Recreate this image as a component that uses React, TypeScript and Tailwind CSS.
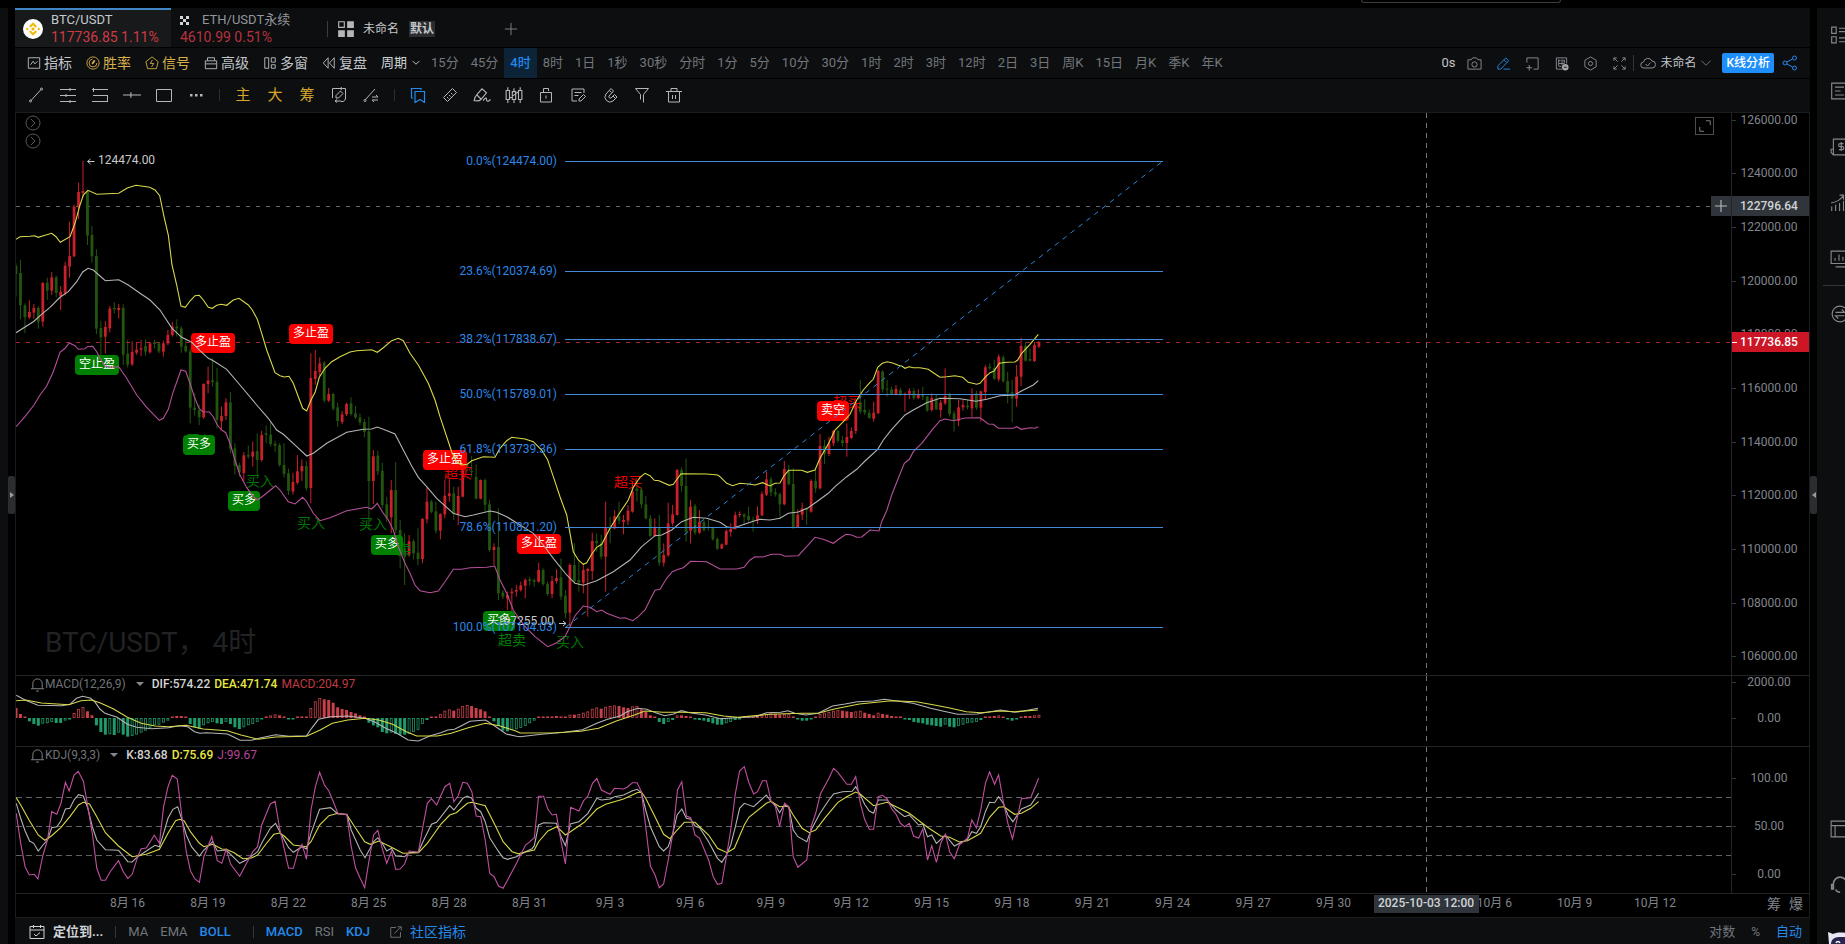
import type { ReactNode } from "react";

type Zone = { x: number; y: number; k: number; pts: string };
type Candle = [number, number, number, number, number];

const UP = "#c9202b";
const DOWN = "#22560f";
const STEP = 4.467;

// rows are [up, high, top, bottom, low], three units to a pixel
const candleZones: { y: number; rows: Candle[] }[] = [
  {
    y: -3,
    rows: [
      [0, 460, 468, 492, 560], [0, 450, 489, 586, 628], [0, 580, 586, 622, 670], [1, 571, 606, 622, 627],
      [1, 582, 594, 608, 626], [0, 588, 594, 635, 656], [1, 516, 519, 635, 650], [0, 503, 518, 542, 570],
      [1, 486, 502, 542, 555], [0, 497, 502, 549, 562], [1, 528, 545, 558, 600], [1, 455, 467, 550, 556],
      [1, 335, 438, 470, 503], [1, 284, 290, 439, 441], [1, 218, 246, 290, 328], [1, 152, 243, 249, 262],
      [0, 240, 243, 377, 405], [0, 348, 375, 439, 458], [0, 418, 438, 656, 672], [0, 632, 654, 682, 745],
      [1, 633, 651, 680, 730], [1, 588, 596, 655, 667], [0, 576, 594, 598, 611], [1, 582, 594, 600, 625],
      [0, 583, 594, 734, 765], [0, 690, 731, 764, 772], [1, 694, 726, 763, 768], [1, 698, 719, 728, 734],
      [1, 690, 715, 719, 738], [0, 688, 708, 725, 737], [1, 695, 700, 727, 730], [0, 690, 697, 702, 716],
      [0, 695, 700, 724, 730], [1, 692, 700, 725, 740], [1, 660, 675, 700, 706], [1, 636, 650, 675, 680],
      [0, 628, 650, 655, 680], [0, 648, 655, 710, 728], [0, 684, 708, 724, 728], [0, 715, 724, 893, 940],
      [0, 850, 893, 900, 917], [0, 884, 900, 922, 945], [1, 820, 822, 922, 926], [1, 770, 811, 822, 850],
      [0, 745, 811, 816, 830], [0, 773, 815, 930, 955], [1, 890, 918, 934, 960], [1, 865, 877, 918, 930],
      [0, 846, 877, 1016, 1030],
    ],
  },
  {
    y: 187,
    rows: [
      [0, 430, 445, 497, 524], [0, 488, 495, 517, 530], [1, 456, 466, 519, 545], [0, 436, 465, 470, 476],
      [1, 425, 455, 470, 500], [0, 400, 453, 480, 525], [1, 392, 405, 480, 485], [0, 376, 400, 405, 430],
      [0, 364, 404, 432, 440], [0, 422, 431, 437, 455], [0, 430, 436, 495, 500], [0, 430, 495, 522, 533],
      [0, 506, 520, 573, 585], [1, 518, 546, 575, 583], [1, 465, 514, 548, 553], [1, 478, 498, 514, 543],
      [0, 482, 498, 565, 572], [1, 160, 234, 564, 610], [1, 150, 213, 237, 254], [1, 172, 190, 216, 228],
      [0, 183, 188, 302, 308], [1, 264, 282, 302, 306], [0, 278, 282, 326, 332], [0, 308, 322, 363, 380],
      [1, 333, 343, 366, 372], [1, 308, 312, 343, 348], [0, 292, 310, 342, 347], [0, 318, 340, 352, 357],
      [0, 340, 352, 367, 376], [0, 357, 366, 396, 412], [0, 350, 394, 543, 690], [1, 450, 469, 543, 612],
      [0, 452, 467, 514, 525], [0, 488, 512, 615, 625], [0, 590, 613, 655, 665], [1, 540, 570, 652, 700],
      [0, 486, 570, 690, 700], [0, 660, 690, 745, 805], [0, 700, 745, 770, 855], [1, 705, 724, 764, 770],
      [0, 718, 724, 760, 778], [0, 685, 758, 777, 796], [1, 654, 657, 777, 790], [1, 560, 605, 658, 670],
      [0, 600, 605, 635, 640], [0, 605, 634, 692, 700], [1, 640, 642, 692, 718], [1, 540, 587, 643, 655],
      [1, 535, 580, 588, 605], [0, 560, 580, 642, 660], [1, 560, 588, 642, 675], [1, 490, 500, 590, 592],
    ],
  },
  {
    y: 287,
    rows: [
      [0, 190, 195, 200, 215], [0, 168, 213, 216, 232], [0, 193, 231, 296, 298], [1, 238, 240, 296, 298],
      [0, 235, 240, 314, 335], [0, 300, 313, 450, 455], [1, 430, 441, 450, 495], [0, 325, 441, 580, 600],
      [0, 570, 578, 590, 597], [1, 575, 585, 595, 630], [1, 565, 575, 580, 635], [1, 555, 570, 575, 590],
      [1, 545, 556, 570, 575], [1, 535, 540, 557, 595], [0, 530, 538, 543, 557], [0, 536, 540, 545, 560],
      [1, 488, 510, 545, 548], [0, 505, 510, 552, 558], [0, 545, 552, 582, 588], [1, 528, 543, 582, 595],
      [1, 508, 534, 543, 550], [0, 475, 532, 590, 600], [0, 570, 587, 640, 655], [1, 490, 495, 638, 680],
      [0, 430, 495, 545, 550], [0, 485, 540, 548, 575], [1, 490, 510, 548, 580], [1, 503, 507, 513, 650],
      [1, 398, 423, 513, 540], [0, 400, 423, 430, 455], [0, 404, 430, 470, 478], [1, 305, 382, 470, 575],
      [0, 350, 382, 386, 430], [1, 330, 349, 385, 388], [0, 305, 349, 362, 372], [1, 345, 360, 366, 403],
      [1, 315, 332, 362, 375], [1, 245, 275, 335, 338], [0, 240, 266, 272, 305], [0, 262, 269, 313, 325],
      [0, 288, 313, 355, 358], [0, 345, 355, 408, 412], [1, 355, 382, 408, 410], [0, 345, 382, 488, 498],
      [1, 430, 465, 488, 500], [1, 308, 370, 466, 470], [1, 315, 343, 370, 378], [1, 207, 210, 345, 347],
      [0, 203, 210, 258, 275], [0, 175, 258, 395, 425], [1, 300, 320, 392, 430], [0, 312, 318, 398, 405],
      [1, 330, 365, 398, 402], [0, 360, 366, 390, 395], [0, 358, 380, 384, 392], [0, 380, 384, 418, 422],
      [0, 412, 417, 446, 450], [1, 430, 433, 446, 447], [1, 388, 393, 434, 436], [1, 370, 387, 396, 410],
      [1, 335, 345, 387, 389],
    ],
  },
  {
    y: 207,
    rows: [
      [1, 574, 582, 585, 592], [0, 580, 583, 590, 615], [0, 560, 588, 600, 605], [0, 590, 599, 602, 635],
      [1, 560, 586, 602, 612], [1, 514, 522, 586, 588], [1, 455, 478, 524, 528], [0, 470, 478, 517, 528],
      [0, 505, 517, 523, 530], [0, 518, 522, 553, 595], [1, 423, 447, 553, 556], [0, 435, 450, 493, 496],
      [0, 445, 492, 622, 627], [1, 568, 584, 622, 624], [1, 548, 565, 584, 600], [0, 563, 566, 570, 615],
      [1, 478, 483, 575, 578], [0, 448, 483, 505, 518], [1, 342, 378, 505, 508], [0, 360, 378, 402, 432],
      [1, 350, 370, 402, 408], [1, 330, 333, 370, 378], [0, 330, 333, 362, 368], [0, 348, 361, 369, 380],
      [1, 310, 351, 369, 410], [1, 322, 333, 354, 357], [1, 245, 250, 333, 342], [0, 180, 247, 275, 282],
      [0, 238, 270, 278, 285], [0, 268, 278, 294, 296], [1, 245, 278, 296, 305], [1, 150, 153, 280, 282],
      [0, 150, 155, 208, 218], [0, 180, 206, 209, 230], [0, 200, 208, 222, 224], [1, 195, 207, 223, 226],
      [0, 203, 210, 222, 228], [1, 218, 221, 224, 275], [1, 205, 213, 221, 237], [0, 205, 213, 234, 240],
      [1, 208, 225, 234, 238], [0, 200, 222, 230, 240], [0, 228, 230, 272, 275], [1, 220, 234, 270, 275],
      [0, 225, 235, 268, 270], [1, 240, 248, 270, 293], [1, 145, 228, 250, 255], [0, 218, 225, 282, 290],
      [0, 272, 280, 302, 335], [1, 240, 262, 303, 318], [1, 240, 255, 262, 272], [0, 240, 257, 262, 268],
      [1, 205, 222, 265, 292], [0, 212, 220, 263, 270], [1, 212, 214, 263, 305], [1, 136, 142, 216, 238],
      [0, 130, 140, 145, 150], [0, 120, 144, 176, 180], [1, 103, 110, 178, 185], [0, 106, 112, 184, 188],
      [0, 155, 183, 218, 250], [0, 180, 217, 236, 307], [1, 135, 170, 236, 260], [1, 53, 78, 170, 198],
      [0, 66, 78, 122, 125], [0, 85, 117, 122, 124], [1, 66, 75, 123, 126], [1, 63, 66, 80, 84],
    ],
  },
];

const candles = candleZones.flatMap((z) =>
  z.rows.map(([up, ...ys]) => ({ up, ys: ys.map((v) => z.y + v / 3) })),
);

const upperBand: Zone[] = [
  { x: -16, y: -3, k: 3, pts: "48,388 60,380 90,379 104,377 115,382 130,377 155,370 168,380 181,397 210,380 225,340 240,285 250,255 264,241 290,253 356,250 382,234 408,226 449,232 465,240 479,257 492,320 505,375 516,465 530,525 543,588 556,592 570,573 585,557 598,556 610,570 625,592 637,595 650,586 664,583 680,586 700,570 717,565 745,585 757,600 772,628 785,670 800,720" },
  { x: 164, y: 187, k: 3, pts: "285,218 300,227 313,231 327,229 340,250 355,290 368,325 380,333 393,300 406,275 418,232 435,205 455,185 480,170 510,156 530,152 575,149 592,157 610,143 635,122 655,115 670,122 690,160 715,195 745,250 765,300" },
  { x: 404, y: 287, k: 3, pts: "45,0 60,50 95,155 110,187 125,195 142,193 155,182 190,170 225,172 240,145 260,122 275,112 315,117 340,125 365,150 383,180 400,230 420,290 440,345 460,455 475,480 490,493 500,488 515,463 530,442 545,433 570,385 595,345 625,300 640,262 660,232 675,220 690,227 703,241 717,242 748,256 760,253 783,221 860,222 893,225" },
  { x: 704, y: 207, k: 3, pts: "0,470 20,490 38,497 60,490 85,492 105,495 128,488 150,498 165,490 180,489 192,467 206,451 245,451 262,457 285,450 300,415 325,372 345,330 370,305 390,283 410,240 430,210 450,187 460,178 473,142 487,130 502,125 520,130 535,136 545,138 555,145 567,140 580,143 600,143 625,148 640,158 660,172 680,170 705,167 728,172 745,187 770,193 780,190 795,172 810,158 822,153 838,130 860,127 885,126 893,120 905,100 930,73 955,43" },
];

const middleBand: Zone[] = [
  { x: -16, y: -3, k: 3, pts: "48,668 100,635 128,610 150,592 180,562 205,545 230,515 248,486 264,475 280,480 300,498 316,512 356,509 385,525 420,550 450,570 480,600 516,655 545,682 575,697 600,722 625,745 640,752 680,778 720,825 770,885 805,925" },
  { x: 164, y: 187, k: 3, pts: "290,390 310,403 350,440 380,468 400,460 440,430 500,397 550,388 575,387 592,381 610,388 645,402 670,450 695,498 715,532" },
  { x: 404, y: 287, k: 3, pts: "20,260 50,295 100,340 135,350 160,345 210,333 230,337 260,350 300,375 340,400 370,435 400,475 440,525 465,550 490,556 530,542 580,515 630,480 665,440 705,407 725,405 755,390 785,365 820,352 860,355 890,364" },
  { x: 704, y: 207, k: 3, pts: "0,607 20,620 40,624 60,617 95,605 120,598 150,600 180,595 205,580 235,576 265,563 290,545 325,520 345,500 380,470 410,448 435,423 473,388 490,360 515,328 555,285 580,270 620,248 660,235 720,236 768,244 800,238 840,227 885,225 900,215 940,195 955,182" },
];

const lowerBand: Zone[] = [
  { x: -16, y: -3, k: 3, pts: "48,950 75,920 102,885 120,855 140,828 160,785 180,727 195,715 208,699 225,707 235,718 255,716 262,710 278,709 290,725 300,745 315,768 330,772 356,770 380,805 410,855 440,892 478,931 490,925 505,898 518,850 543,780 557,784 570,820 583,860 597,895 608,905 628,906 640,920 652,945 665,960" },
  { x: 164, y: 187, k: 3, pts: "137,398 150,430 165,480 180,525 200,563 220,590 232,600 250,587 287,557 300,570 325,605 345,612 368,592 380,605 400,640 420,662 450,653 500,632 560,622 575,627 592,610 610,640 625,660 640,690 655,740 675,790 690,820 705,855 720,872 750,878 775,873 795,845" },
  { x: 404, y: 287, k: 3, pts: "100,508 125,508 150,503 200,502 224,498 240,540 260,580 280,630 300,660 320,685 345,710 383,740 410,728 435,710 450,680 465,647 490,618 510,622 530,635 545,630 560,640 600,655 615,653 638,662 655,650 675,630 690,600 705,571 720,568 740,535 757,515 775,508 790,503 812,484 860,485 890,502" },
  { x: 704, y: 207, k: 3, pts: "0,747 50,747 72,742 90,720 105,710 128,711 155,703 180,703 195,709 235,707 260,680 285,652 310,658 340,670 360,655 378,643 395,645 410,652 425,651 435,643 450,630 477,633 485,605 500,572 515,525 535,475 553,430 568,418 580,395 605,370 640,325 660,302 675,297 700,302 735,294 780,293 805,312 820,313 835,325 880,325 890,320 903,328 930,323 945,325 955,320" },
];

const macdBars = [
  30, 12, 2, -10, -18, -23, -17, -16, -12, -15, -15, -8, -2, 15, 27, 33, 20, 8, -22, -42, -50, -49, -51, -44, -50, -56,
  -54, -50, -44, -38, -30, -22, -20, -14, -8, 3, 6, 6, 4, -18, -28, -32, -22, -16, -12, -16, -18, -12, -18, -28, -33,
  -28, -22, -18, -12, -4, 4, 8, 11, 8, 3, -2, -4, 2, 3, 4, 30, 50, 60, 56, 54, 46, 32, 27, 24, 18, 14, 8, 3, -14, -22,
  -28, -42, -46, -44, -48, -50, -50, -48, -42, -36, -18, -6, 3, 4, 12, 22, 26, 22, 28, 36, 39, 36, 30, 26, 20, 4, -10,
  -24, -38, -40, -36, -34, -30, -24, -16, -8, 2, 3, 3, 3, 6, 3, 1, 10, 10, 12, 16, 20, 28, 32, 28, 34, 36, 38, 36, 32,
  30, 35, 36, 26, 18, 8, 2, -12, -18, -12, -6, 8, 8, 6, 2, -4, -6, -8, -12, -16, -20, -20, -16, -12, -6, -2, 1, 3, 4,
  6, 8, 12, 14, 12, 10, 12, 14, 3, -4, -8, -8, -4, 2, 12, 16, 18, 22, 24, 22, 20, 18, 20, 22, 16, 12, 8, 16, 12, 10,
  6, 4, 2, -3, -6, -12, -14, -16, -20, -22, -24, -26, -20, -26, -28, -24, -20, -16, -14, -12, -6, 3, 4, 6, 8, 3, -4,
  -8, -3, 4, 6, 6, 8, 10,
];

const dif: Zone[] = [
  { x: -16, y: -16, k: 2.904, pts: "47,106 73,120 110,136 180,137 203,133 222,115 240,109 262,114 275,125 290,147 305,160 340,172 370,193 397,202 440,206 490,203 520,197 545,200 565,215 580,220 600,218 660,222 680,232 697,241 730,241 755,234 800,224 840,229 890,227 905,205 925,178 960,170 1010,168 1060,175 1090,187 1120,205 1150,218 1185,240 1215,243 1250,227 1280,218 1300,210 1320,208 1340,197 1365,184 1410,180 1440,200 1470,222 1500,229" },
  { x: 504, y: -16, k: 2.8, pts: "0,230 60,223 125,217 175,209 215,190 245,178 280,168 300,155 330,145 355,148 380,158 405,167 430,162 452,152 475,158 520,165 560,176 590,174 660,170 690,158 730,157 750,152 770,160 800,165 835,160 875,138 910,132 945,125 990,123 1020,118 1060,124 1100,130 1150,145 1180,152 1225,163 1280,162 1345,150 1385,157 1410,153 1450,145" },
];

const dea: Zone[] = [
  { x: -16, y: -16, k: 2.904, pts: "47,122 75,120 120,129 200,134 235,122 265,120 290,128 330,147 370,172 410,190 450,198 490,200 540,196 590,207 660,212 700,225 750,238 800,231 890,229 930,210 965,190 1010,180 1060,175 1100,180 1140,193 1180,215 1210,228 1270,228 1310,220 1360,203 1410,190 1450,197 1500,214" },
  { x: 504, y: -16, k: 2.8, pts: "0,219 100,218 170,214 220,205 270,183 320,165 350,153 400,157 450,157 520,158 570,168 610,172 700,163 790,160 835,160 880,147 950,132 1040,122 1110,125 1160,135 1200,143 1250,155 1290,158 1345,153 1385,155 1450,150" },
];

const kdjJ: Zone[] = [
  { x: -16, y: -87, k: 2.904, pts: "47,460 60,550 73,620 85,645 100,643 110,657 125,585 138,540 150,455 165,463 177,430 190,367 201,393 215,345 227,334 242,363 255,440 268,520 281,625 294,661 306,661 320,635 344,602 358,635 371,655 384,643 400,590 410,566 425,564 448,526 463,550 475,440 488,380 500,346 515,357 527,460 540,570 553,632 566,657 579,667 592,590 615,530 631,602 644,610 657,568 670,613 696,649 715,612 734,575 748,560 760,495 785,432 799,424 812,505 825,565 838,625 852,625 865,575 877,553 890,598 903,450 916,380 928,337 942,375 955,393 968,425 981,460 994,463 1007,463 1020,560 1033,625 1046,655 1059,683 1072,600 1085,525 1097,511 1110,565 1123,610 1137,573 1149,628 1162,627 1175,612 1188,573 1215,576 1228,500 1241,430 1253,416 1268,435 1292,380 1306,370 1318,425 1330,408 1344,367 1357,370 1370,395 1383,468 1396,470 1409,540 1422,640 1435,650 1448,678 1461,685 1474,660 1500,610 1526,555 1539,545" },
  { x: 504, y: -87, k: 2.8, pts: "40,533 52,409 66,409 78,448 90,465 102,463 115,545 127,612 142,442 165,453 178,422 190,408 203,370 215,355 228,390 252,403 265,385 290,387 302,380 315,368 328,368 340,395 352,500 365,618 378,645 390,683 402,672 415,600 428,520 441,390 453,365 466,468 478,473 490,525 503,535 528,600 541,650 553,673 565,670 578,590 590,510 603,400 615,333 628,320 641,368 654,402 665,395 679,362 690,362 703,423 715,440 727,500 741,430 753,440 765,590 778,622 803,600 815,500 828,460 841,402 865,355 878,325 890,337 915,373 928,373 940,350 953,430 965,478 978,508 990,508 1003,410 1015,406 1028,416 1041,447 1053,463 1065,490 1077,500 1090,490 1102,528 1116,535 1128,507 1141,600 1153,557 1166,607 1178,550 1191,522 1203,575 1216,596 1230,555 1253,535 1265,480 1278,503 1290,450 1303,370 1315,335 1329,373 1340,345 1353,423 1366,490 1379,537 1391,480 1404,416 1430,413 1452,355" },
];

const kdjK: Zone[] = [
  { x: -16, y: -87, k: 2.904, pts: "47,430 60,475 73,513 86,543 98,550 111,573 125,555 138,540 150,503 165,500 177,482 190,447 203,445 215,420 228,404 242,408 255,445 268,500 281,540 306,569 344,571 358,588 371,605 384,606 400,590 425,573 450,556 463,560 475,520 488,475 502,448 516,440 527,475 541,525 556,560 579,588 592,570 618,545 631,573 657,570 670,583 696,610 715,600 748,575 762,545 785,505 800,490 815,520 838,563 852,577 877,560 890,567 903,520 928,448 960,443 981,462 1007,463 1020,510 1046,570 1060,593 1075,565 1085,545 1097,533 1110,550 1123,573 1137,565 1149,588 1175,590 1188,578 1215,576 1228,545 1253,493 1268,487 1306,437 1318,450 1344,415 1357,408 1370,415 1383,445 1396,455 1409,485 1422,533 1448,575 1461,593 1474,598 1500,590 1526,575 1545,566" },
  { x: 504, y: -87, k: 2.8, pts: "40,557 52,495 66,488 102,490 115,530 127,557 141,492 165,485 190,460 215,415 228,420 252,417 265,410 290,405 315,392 328,388 340,398 352,450 365,500 390,560 402,573 415,560 428,520 440,465 453,447 466,475 478,478 490,498 503,503 528,545 553,595 565,607 578,585 590,555 603,500 615,445 628,430 654,440 690,405 703,425 715,435 727,458 740,435 753,442 765,510 778,530 803,545 815,510 840,460 865,420 878,402 903,395 930,394 940,380 953,405 965,433 978,453 990,460 1003,420 1028,420 1053,450 1077,470 1090,465 1116,495 1128,492 1141,530 1153,525 1166,550 1191,525 1216,558 1253,538 1265,515 1278,520 1290,500 1303,455 1315,427 1329,428 1340,410 1353,430 1366,465 1380,485 1404,447 1430,435 1452,400" },
];

const kdjD: Zone[] = [
  { x: -16, y: -87, k: 2.904, pts: "47,413 60,435 86,483 111,525 130,541 150,527 177,502 203,470 228,435 242,427 260,432 281,470 306,518 344,558 384,590 425,583 463,568 488,520 510,482 522,478 535,483 553,515 579,550 592,560 618,553 644,567 657,568 680,578 705,596 730,594 748,585 770,555 795,523 812,519 825,528 852,555 890,560 903,545 928,495 955,467 981,460 1007,464 1033,505 1059,545 1075,553 1100,543 1137,562 1170,580 1215,578 1241,550 1280,493 1306,465 1325,458 1357,430 1370,427 1409,437 1435,490 1461,545 1487,575 1508,582" },
  { x: 504, y: -87, k: 2.8, pts: "0,580 40,570 52,545 78,513 103,500 127,525 141,515 180,487 215,447 240,433 290,417 328,398 340,396 352,415 378,470 402,523 420,536 440,510 460,487 490,487 528,525 553,565 580,578 600,565 628,495 641,472 690,430 703,424 727,440 750,438 765,465 790,505 810,518 828,510 853,475 890,427 915,410 940,396 953,403 990,437 1028,427 1053,440 1090,460 1141,502 1178,528 1203,532 1230,546 1253,542 1290,520 1315,472 1340,442 1355,440 1385,463 1404,460 1430,445 1452,425" },
];

const fibLevels: [number, string][] = [
  [48, "0.0%(124474.00)"],
  [158, "23.6%(120374.69)"],
  [226, "38.2%(117838.67)"],
  [281, "50.0%(115789.01)"],
  [336, "61.8%(113739.36)"],
  [414, "78.6%(110821.20)"],
  [514, "100.0%(107104.03)"],
];

const badges: [number, number, string, string][] = [
  [59, 242, "空止盈", "#008000"],
  [175, 220, "多止盈", "#ff0000"],
  [273, 211, "多止盈", "#ff0000"],
  [167, 322, "买多", "#008000"],
  [212, 378, "买多", "#008000"],
  [355, 422, "买多", "#008000"],
  [407, 337, "多止盈", "#ff0000"],
  [501, 421, "多止盈", "#ff0000"],
  [467, 498, "买多", "#008000"],
  [801, 288, "卖空", "#ff0000"],
];

const signals: [number, number, string, string][] = [
  [184, 327, "买入", "#007400"],
  [244, 368, "买入", "#007400"],
  [295, 410, "买入", "#007400"],
  [357, 411, "买入", "#007400"],
  [381, 436, "超卖", "#007400"],
  [442, 360, "超买", "#e80000"],
  [612, 369, "超买", "#e80000"],
  [496, 527, "超卖", "#008000"],
  [554, 529, "买入", "#007400"],
  [831, 289, "超买", "#e80000"],
];

const dates = [
  "8月 16", "8月 19", "8月 22", "8月 25", "8月 28", "8月 31", "9月 3", "9月 6", "9月 9", "9月 12", "9月 15",
  "9月 18", "9月 21", "9月 24", "9月 27", "9月 30", "", "10月 6", "10月 9", "10月 12",
];

const periods = [
  "15分", "45分", "4时", "8时", "1日", "1秒", "30秒", "分时", "1分", "5分", "10分", "30分", "1时", "2时", "3时",
  "12时", "2日", "3日", "周K", "15日", "月K", "季K", "年K",
];

function Icon({ children, className = "size-4" }: { children: ReactNode; className?: string }) {
  return (
    <svg viewBox="0 0 16 16" fill="none" stroke="currentColor" className={`shrink-0 ${className}`} aria-hidden="true">
      {children}
    </svg>
  );
}

function Curve({ zones, color }: { zones: Zone[]; color: string }) {
  const points = zones
    .flatMap((z) =>
      z.pts.split(" ").map((p) => {
        const [x, y] = p.split(",").map(Number);
        return `${(z.x + x / z.k).toFixed(1)},${(z.y + y / 3).toFixed(1)}`;
      }),
    )
    .join(" ");
  return <polyline points={points} fill="none" stroke={color} strokeWidth="1.1" />;
}

function Crosshair() {
  return <line x1="1410.5" x2="1410.5" y1="0" y2="100%" stroke="#757575" strokeDasharray="5 5" />;
}

function Axis({ labels, children }: { labels: [number, string][]; children?: ReactNode }) {
  return (
    <div className="w-[78px] shrink-0 border-l border-[#222426]">
      <svg className="block h-full w-full" fontSize="12" fill="#80858c" textAnchor="middle">
        {labels.map(([y, text]) => (
          <g key={y}>
            <path d={`M0 ${y + 0.5}h4`} stroke="#33363a" />
            <text x="37" y={y} dominantBaseline="central">
              {text}
            </text>
          </g>
        ))}
        {children}
      </svg>
    </div>
  );
}

function MainPane() {
  return (
    <div className="relative flex h-[562px]">
      <svg className="block h-full min-w-0 flex-1" fontSize="12">
        <text x="29" y="529" fontSize="28" fill="#202224" dominantBaseline="central">
          BTC/USDT， 4时
        </text>
        <line x1="0" x2="100%" y1="93.5" y2="93.5" stroke="#686868" strokeDasharray="4 6" />
        <line x1="0" x2="100%" y1="229.5" y2="229.5" stroke="#a8242c" strokeDasharray="4 6" />

        {candles.map(({ up, ys: [high, top, bottom, low] }, i) => {
          const x = i * STEP;
          const color = up ? UP : DOWN;
          return (
            <g key={i} fill={color}>
              <rect x={x - 0.5} y={high} width="1" height={low - high} />
              <rect x={x - 1.4} y={top} width="2.8" height={Math.max(bottom - top, 1)} />
            </g>
          );
        })}

        {signals.map(([x, y, text, color]) => (
          <text key={x} x={x} y={y} fontSize="14" fill={color} textAnchor="middle" dominantBaseline="central">
            {text}
          </text>
        ))}

        {badges.map(([x, y, text, color]) => (
          <g key={x}>
            <rect x={x} y={y} width={text.length * 12 + 8} height="20" rx="4" fill={color} />
            <text x={x + 4} y={y + 9} fill="#fff" dominantBaseline="central">
              {text}
            </text>
          </g>
        ))}

        <Curve zones={upperBand} color="#d8d84a" />
        <Curve zones={middleBand} color="#b4b4b4" />
        <Curve zones={lowerBand} color="#b4509a" />

        <g fill="#c8c8c8" stroke="none">
          <text x="82" y="47" dominantBaseline="central">
            124474.00
          </text>
          <text x="538" y="508" textAnchor="end" dominantBaseline="central">
            107255.00
          </text>
        </g>
        <path d="M71.500 48.500h7m-7 0 3-2.500m-3 2.500 3 2.500M543 510.500h7m0 0-3-2.500m3 2.500-3 2.500" stroke="#c8c8c8" fill="none" />

        <path d="M550 514 1147 48" stroke="#2f86dd" strokeDasharray="5 5" />
        {fibLevels.map(([y, text]) => (
          <g key={y}>
            <line x1="549" x2="1147" y1={y + 0.5} y2={y + 0.5} stroke="#4389d6" />
            <text x="541" y={y} fill="#2f86e6" textAnchor="end" dominantBaseline="central">
              {text}
            </text>
          </g>
        ))}

        <g stroke="#55585c" fill="none">
          <circle cx="17" cy="10" r="7" />
          <path d="m15 6 4 4-4 4" />
          <circle cx="17" cy="28" r="7" />
          <path d="m15 24 4 4-4 4" />
        </g>
        <Crosshair />
      </svg>

      <Axis
        labels={[
          [7, "126000.00"],
          [60, "124000.00"],
          [114, "122000.00"],
          [168, "120000.00"],
          [221, "118000.00"],
          [275, "116000.00"],
          [329, "114000.00"],
          [382, "112000.00"],
          [436, "110000.00"],
          [490, "108000.00"],
          [543, "106000.00"],
        ]}
      >
        <rect x="0" y="83" width="78" height="20" fill="#2f353b" />
        <text x="37" y="93" fill="#d0d3d6" fontWeight="500" dominantBaseline="central">
          122796.64
        </text>
        <rect x="0" y="219" width="78" height="20" fill="#cc1626" />
        <path d="M0 229.500h5" stroke="#fff" />
        <text x="37" y="229" fill="#fff" fontWeight="500" dominantBaseline="central">
          117736.85
        </text>
      </Axis>

      <button aria-label="添加" className="absolute top-[83px] right-[78px] flex h-5 w-5 items-center justify-center bg-[#2f353b] text-[#b8bcc0]">
        <Icon className="size-3">
          <path d="M8 0v16M0 8h16" strokeWidth="1.5" />
        </Icon>
      </button>
      <button aria-label="展开" className="absolute top-1 right-[95px] flex h-[18px] w-[19px] items-center justify-center border border-[#4a4d51] text-[#8a8d91]">
        <Icon className="size-3.5">
          <path d="M9 2h5v5M2 9v5h5" />
        </Icon>
      </button>
    </div>
  );
}

function IndicatorTitle({ name, children }: { name: string; children: ReactNode }) {
  return (
    <div className="absolute top-0 left-[14px] flex h-4 items-center text-xs leading-4">
      <Icon className="size-[15px] text-[#85898e]">
        <path d="M1 12.500h14M3 12V7a5 5 0 0 1 10 0v5M6.500 15h3" />
      </Icon>
      <span className="text-[#6f7378]">{name}</span>
      <button aria-label="菜单" className="mr-2 ml-2.5 text-[#85898e]">
        <svg viewBox="0 0 8 4" className="h-1 w-2 fill-current">
          <path d="M0 0h8L4 4z" />
        </svg>
      </button>
      <div className="flex gap-1">{children}</div>
    </div>
  );
}

function MacdPane() {
  return (
    <div className="relative flex h-[71px] border-t border-[#222426]">
      <svg className="block h-full min-w-0 flex-1">
        {macdBars.map((v, i) => {
          const x = i * STEP;
          const h = Math.max(Math.abs(v) / 3, 1.5);
          const y = v > 0 ? 42 - h : 42;
          const color = v > 0 ? "#c8404a" : "#1f9a6a";
          const hollow = i > 0 && v > macdBars[i - 1];
          return hollow && h > 2 ? (
            <rect key={i} x={x - 1} y={y + 0.5} width="2" height={h - 1} fill="none" stroke={color} strokeWidth="0.8" />
          ) : (
            <rect key={i} x={x - 1.5} y={y} width="3" height={h} fill={color} />
          );
        })}
        <Curve zones={dif} color="#b4b4b4" />
        <Curve zones={dea} color="#d8d84a" />
        <Crosshair />
      </svg>
      <IndicatorTitle name="MACD(12,26,9)">
        <span className="font-medium text-[#d4d4d4]">DIF:574.22</span>
        <span className="font-medium text-[#e8e840]">DEA:471.74</span>
        <span className="text-[#c03a40]">MACD:204.97</span>
      </IndicatorTitle>
      <Axis
        labels={[
          [6, "2000.00"],
          [42, "0.00"],
        ]}
      />
    </div>
  );
}

function KdjPane() {
  return (
    <div className="relative flex h-[147px] border-t border-[#222426]">
      <svg className="block h-full min-w-0 flex-1">
        {[50.5, 79.5, 108.5].map((y) => (
          <line key={y} x1="0" x2="100%" y1={y} y2={y} stroke="#626262" strokeDasharray="6 4" />
        ))}
        <Curve zones={kdjK} color="#b4b4b4" />
        <Curve zones={kdjD} color="#d8d84a" />
        <Curve zones={kdjJ} color="#c04fa0" />
        <Crosshair />
      </svg>
      <IndicatorTitle name="KDJ(9,3,3)">
        <span className="font-medium text-[#d4d4d4]">K:83.68</span>
        <span className="font-medium text-[#e8e840]">D:75.69</span>
        <span className="text-[#b8479a]">J:99.67</span>
      </IndicatorTitle>
      <Axis
        labels={[
          [31, "100.00"],
          [79, "50.00"],
          [127, "0.00"],
        ]}
      />
    </div>
  );
}

function DateAxis() {
  return (
    <div className="relative flex h-6 items-center border-t border-[#222426]">
      <svg className="block h-full min-w-0 flex-1" fontSize="12" fill="#80858c" textAnchor="middle">
        {dates.map((d, i) => (
          <text key={i} x={111.5 + i * 80.4} y="9" dominantBaseline="central">
            {d}
          </text>
        ))}
        <rect x="1358" y="1" width="105" height="18" fill="#2f353b" />
        <text x="1410" y="9" fill="#d0d3d6" fontWeight="500" dominantBaseline="central">
          2025-10-03 12:00
        </text>
      </svg>
      <div className="flex w-[78px] justify-end gap-2 pr-1.5 pb-1 text-sm text-[#80858c]">
        <button>筹</button>
        <button>爆</button>
      </div>
    </div>
  );
}

function Tabs() {
  return (
    <div className="flex h-10 border-b border-black bg-[#0c0e10]">
      <button className="flex w-[156px] items-center gap-2.5 border-t-2 border-[#4187c8] bg-[#17191b] pl-2 text-left">
        <svg viewBox="0 0 20 20" className="size-5 shrink-0">
          <circle cx="10" cy="10" r="10" fill="#fff" />
          <g fill="#f0b90b">
            <path d="m10 8 2 2-2 2-2-2zM4.300 8.500 5.800 10l-1.500 1.500L2.800 10zM15.700 8.500l1.500 1.500-1.500 1.500-1.500-1.500z" />
            <path d="m10 3.200 4 4-1.500 1.500L10 6.200 7.500 8.700 6 7.200zM10 16.800l4-4-1.500-1.500-2.500 2.500-2.500-2.500L6 12.800z" />
          </g>
        </svg>
        <span className="-ml-0.5 flex flex-col whitespace-nowrap">
          <span className="text-[13px] leading-[18px] text-[#c6c9cc]">BTC/USDT</span>
          <span className="text-sm leading-[17px] text-[#d03a44]">117736.85 1.11%</span>
        </span>
      </button>
      <button className="flex w-[156px] flex-col pt-[3px] pl-[9px] text-left whitespace-nowrap">
        <span className="flex items-center gap-[13px] text-[13px] leading-[18px] text-[#92969b]">
          <svg viewBox="0 0 9 9" className="h-[9px] w-[9px] fill-[#d5d5d5]">
            <path d="M0 0h3v3H0zM6 0h3v3H6zM3 3h3v3H3zM0 6h3v3H0zM6 6h3v3H6z" />
          </svg>
          ETH/USDT永续
        </span>
        <span className="text-sm leading-[17px] text-[#b8323e]">4610.99 0.51%</span>
      </button>
      <div className="flex items-center pt-0.5 text-xs">
        <span className="h-4 w-px bg-[#3a3d40]" />
        <button className="ml-[9px] flex items-center gap-2 text-[#c6c9cc]">
          <Icon className="size-[18px] text-[#b4b6b8]">
            <path d="M1.500 1.500h5v5h-5z" />
            <path d="M9 1h6v6H9zM1 9h6v6H1zM9 9h6v6H9z" fill="currentColor" stroke="none" />
          </Icon>
          未命名
          <span className="ml-0.5 bg-[#2b2e31] px-px leading-4 font-bold">默认</span>
        </button>
        <button aria-label="新建" className="ml-[69px] text-[#85898e]">
          <Icon className="size-3.5">
            <path d="M8 1v14M1 8h14" />
          </Icon>
        </button>
      </div>
    </div>
  );
}

function MenuButton({ label, children, gold }: { label: string; children: ReactNode; gold?: boolean }) {
  return (
    <button className={`mr-3.5 flex items-center gap-[3px] ${gold ? "text-[#d8b04a]" : "text-[#c2c5c9]"}`}>
      <Icon className="size-3.5">{children}</Icon>
      {label}
    </button>
  );
}

function PeriodBar() {
  return (
    <div className="flex h-[31px] items-center border-b border-black bg-[#0c0e10] text-sm whitespace-nowrap">
      <div className="flex items-center pl-3">
        <MenuButton label="指标">
          <path d="M1.500 2h13v12h-13zM4 10l3-4 2 3 3-3" />
        </MenuButton>
        <MenuButton label="胜率" gold>
          <circle cx="8" cy="8" r="7" />
          <circle cx="8" cy="8" r="4.500" strokeDasharray="20 8" />
          <path d="m7 9 3-4" strokeWidth="2" />
        </MenuButton>
        <MenuButton label="信号" gold>
          <path d="M8 1 1 6.500 3 14.500h10l2-8zM8.500 4.500l-2.500 4h4l-2.500 4" />
        </MenuButton>
        <MenuButton label="高级">
          <path d="M1.500 5.500h13v9h-13zM4 5V2h8v3M2 9h12" />
        </MenuButton>
        <MenuButton label="多窗">
          <path d="M2 2h4.500v12H2zM9.500 2H14v5H9.500zM9.500 10H14v4H9.500z" />
        </MenuButton>
        <MenuButton label="复盘">
          <path d="M7 2 1.500 8 7 14zM14 2 8.500 8l5.500 6z" />
        </MenuButton>
        <button className="mr-1 flex items-center gap-1 text-[13px] text-[#d0d3d6]">
          周期
          <Icon className="size-2.5">
            <path d="m3 5 5 5 5-5" strokeWidth="1.500" />
          </Icon>
        </button>
      </div>
      <div className="flex h-full text-[13px]">
        {periods.map((p) => (
          <button
            key={p}
            className={p === "4时" ? "bg-[#0c2338] px-1.5 font-medium text-[#2389ea]" : "px-1.5 text-[#73777c]"}
          >
            {p}
          </button>
        ))}
      </div>
      <div className="ml-auto flex items-center pr-3 text-xs text-[#8a8d91]">
        <span className="mr-3 text-[13px] text-[#c2c5c9]">0s</span>
        <div className="flex gap-3.5">
          <button aria-label="截图">
            <Icon className="size-[15px]">
              <path d="M1 4h3.500L6 2h4l1.500 2H15v10H1z" />
              <circle cx="8" cy="9" r="2.800" />
            </Icon>
          </button>
          <button aria-label="画线" className="text-[#2389ea]">
            <Icon className="size-[15px]">
              <path d="M2 14v-3.500L10.500 2l3 3L5 14zM8.500 4l3 3M8 14h7" />
            </Icon>
          </button>
          <button aria-label="新增图层">
            <Icon className="size-[15px]">
              <path d="M2 7V2h12v12H9M4.500 9.500v6M1.500 12.500h6" />
            </Icon>
          </button>
          <button aria-label="数据">
            <Icon className="size-[15px]">
              <path d="M13.500 8V2h-11v12h6M5 5h2M9 5h2M5 8h6M5 11h3M5 3.500v7M8.500 3.500v6M11 4v4" />
              <circle cx="12" cy="12" r="3.500" fill="#a4a7aa" stroke="none" />
              <path d="M10.500 12h3" stroke="#0c0e10" />
            </Icon>
          </button>
          <button aria-label="设置">
            <Icon className="size-[15px]">
              <path d="M8 1 2 4.500v7L8 15l6-3.500v-7z" />
              <circle cx="8" cy="8" r="2.200" />
            </Icon>
          </button>
          <button aria-label="全屏">
            <Icon className="size-[15px]">
              <path d="M2 5V2h3M2 2l4 4M11 2h3v3M14 2l-4 4M2 11v3h3M2 14l4-4M14 11v3h-3M14 14l-4-4" />
            </Icon>
          </button>
        </div>
        <span className="mx-1.5 h-4 w-px bg-[#33363a]" />
        <button className="flex items-center gap-1">
          <Icon>
            <path d="M4 13a3 3 0 0 1-.5-6A4.500 4.500 0 0 1 12 6a3.500 3.500 0 0 1 0 7zM5.500 9l2 2 3-3.500" />
          </Icon>
          <span className="text-[#c2c5c9]">未命名</span>
          <Icon className="size-3">
            <path d="m2 5 6 6 6-6" />
          </Icon>
        </button>
        <button className="ml-2.5 h-5 rounded-xs bg-[#1e8efa] px-1 font-medium text-white">K线分析</button>
        <button aria-label="分享" className="ml-2 text-[#2389ea]">
          <Icon>
            <circle cx="3" cy="8" r="2" />
            <circle cx="12.500" cy="3" r="2" />
            <circle cx="12.500" cy="13" r="2" />
            <path d="m5 7 5.500-3M5 9l5.500 3" />
          </Icon>
        </button>
      </div>
    </div>
  );
}

const Tool = ({ label, children, className = "" }: { label: string; children: ReactNode; className?: string }) => (
  <button aria-label={label} className={`flex w-8 items-center justify-center ${className}`}>
    {children}
  </button>
);

function DrawBar() {
  return (
    <div className="flex h-[34px] items-center border-b border-[#1a1c1e] bg-[#0c0e10] pb-px pl-[5px] text-[15px] text-[#b4b7ba]">
      <Tool label="线段">
        <Icon>
          <path d="m3 13.500 10-11" />
          <circle cx="2.500" cy="14" r="1" />
          <circle cx="13.500" cy="2" r="1" />
        </Icon>
      </Tool>
      <Tool label="平行线">
        <Icon>
          <path d="M0 2.500h16M0 8.500h16M0 14.500h16" />
          <path d="M9 1.500h2v2H9zM5 7.500h2v2H5zM9 13.500h2v2H9z" fill="currentColor" stroke="none" />
        </Icon>
      </Tool>
      <Tool label="斐波那契">
        <Icon>
          <path d="M0 2.500h16M1 8.500h15M0 14.500h16M1.500 1v4M15.500 8v6" />
        </Icon>
      </Tool>
      <Tool label="水平线">
        <Icon className="size-[18px]">
          <path d="M0 8h16M7 5.500v5" />
        </Icon>
      </Tool>
      <Tool label="矩形">
        <Icon>
          <path d="M.5 2.500h15v12H.5z" />
        </Icon>
      </Tool>
      <Tool label="更多">
        <Icon>
          <path d="M2 7h2.500v2.500H2zM7 7h2.500v2.500H7zM12 7h2.500v2.500H12z" fill="currentColor" stroke="none" />
        </Icon>
      </Tool>
      <span className="mx-[7px] h-3 w-px bg-[#2c2f32]" />
      <Tool label="主" className="text-[#d9a62a]">主</Tool>
      <Tool label="大" className="text-[#d9a62a]">大</Tool>
      <Tool label="筹" className="text-[#d9a62a]">筹</Tool>
      <Tool label="循环画线">
        <Icon>
          <path d="M4 1.500H1.500V11M4 14h6M11.500 1.500h3V12l-2 2.500H10M4 1.500h7M9.500 0l2 1.500-2 1.500M6 12.500l-2 1.500 2 1.500M5 11V8.500L9.500 4 12 6.500 7.500 11z" />
        </Icon>
      </Tool>
      <Tool label="线段切换">
        <Icon>
          <path d="M2 13 12 2M9 10h6l-2-2M15 13H9l2 2" />
          <circle cx="2" cy="13.500" r="1" />
        </Icon>
      </Tool>
      <span className="mx-[7px] h-3 w-px bg-[#2c2f32]" />
      <Tool label="收藏" className="text-[#2389ea]">
        <Icon>
          <path d="M5 4.500h9.500v11l-4.500-3-5 3zM1 11h2M1.500 11V1.500H11V3" strokeWidth="1.200" />
        </Icon>
      </Tool>
      <Tool label="测量">
        <Icon>
          <path d="m10.500 1.500 4 4-9 9-4-4zM9 6l1.500 1.500M7 8l1.500 1.500M5 10l1.500 1.500" />
        </Icon>
      </Tool>
      <Tool label="画笔">
        <Icon className="size-[18px]">
          <path d="M1 13c0-3 1-4 3-6l4-4.500 4 3.500-5 6c-2 2-4 1-6 1zM3.500 8l4 4M9 13c2-3 3-3 3-1s1.500 2 3.500 0" />
        </Icon>
      </Tool>
      <Tool label="K线形态">
        <Icon className="size-[18px]">
          <path d="M1 4h3v8H1zM6.500 5h3v7h-3zM12 4h3v8h-3zM2.500 1v3M2.500 12v3M8 2v3M8 12v3M13.500 1v3M13.500 12v3M4 11 12 5" />
        </Icon>
      </Tool>
      <Tool label="锁定">
        <Icon>
          <path d="M2.500 5.500h11v9.500h-11zM5.500 5V1.500h5V4M8 8.500v3" />
        </Icon>
      </Tool>
      <Tool label="备注">
        <Icon>
          <path d="M14 6V2H2v12h5M4.500 5.500h7M4.500 8.500h4M9 14v-2l4.500-4.500 2 2L11 14z" />
        </Icon>
      </Tool>
      <Tool label="磁铁">
        <Icon>
          <path d="M9 1.500 4 7a5 5 0 0 0 7 7l4-4-2.500-2.500L9 11a1.500 1.500 0 0 1-2-2l4.500-5zM7.500 3.500l2 2M11 9l2.500 2.500" />
        </Icon>
      </Tool>
      <Tool label="筛选">
        <Icon>
          <path d="M1.500 1.500h13L9.500 7.500v8M1.500 1.500l5 6v5" />
        </Icon>
      </Tool>
      <Tool label="删除">
        <Icon>
          <path d="M2.500 4.500h11V15h-11zM0 4.500h16M5 4V1.500h6V4M6.500 8v4M9.500 8v4" />
        </Icon>
      </Tool>
    </div>
  );
}

function BottomBar() {
  const off = "text-[#73777c]";
  const on = "font-medium text-[#2389ea]";
  return (
    <div className="flex h-[26px] items-center bg-[#0c0e10] pt-px pl-3.5 text-[13px]">
      <button className="flex items-center gap-2 font-bold text-[#d0d3d6]">
        <Icon>
          <path d="M1 2.500h14v12H1zM1 6h14M4.500 1v3M11.500 1v3M5 10l2 2 4-3.500" />
        </Icon>
        定位到...
      </button>
      <span className="mx-3 h-3 w-px bg-[#33363a]" />
      <div className="flex gap-3">
        <button className={off}>MA</button>
        <button className={off}>EMA</button>
        <button className={on}>BOLL</button>
      </div>
      <span className="mr-3 ml-[22px] h-3 w-px bg-[#33363a]" />
      <div className="flex gap-3">
        <button className={on}>MACD</button>
        <button className={off}>RSI</button>
        <button className={on}>KDJ</button>
      </div>
      <a href="#" className="ml-5 flex items-center gap-2 text-sm text-[#2389ea]">
        <Icon className="size-3 text-[#85898e]">
          <path d="M8 2H1v13h13V8M6 10l8-8.500M10 1h5v5" />
        </Icon>
        社区指标
      </a>
      <div className="ml-auto flex items-center gap-4 pr-2">
        <button className={off}>对数</button>
        <button className="text-xs text-[#73777c]">%</button>
        <button className="text-[13px] text-[#2389ea]">自动</button>
      </div>
    </div>
  );
}

function SideRail() {
  const icon = "size-[18px]";
  return (
    <nav className="flex w-7 shrink-0 flex-col overflow-hidden bg-[#0c0e10] text-[#85898e]">
      <div className="flex flex-col gap-[38px] pt-[18px] pl-[13px]">
        <button aria-label="列表">
          <Icon className={icon}>
            <path d="M1.500 1h4v5.500h-4zM1.500 9.500h4V15h-4zM8 2h8M8 5h8M8 10.500h8M8 14h8" />
          </Icon>
        </button>
        <button aria-label="资讯">
          <Icon className={icon}>
            <path d="M1.500 1h14v14h-14zM4.500 4.500h8M4.500 8h5M4.500 11.500h8" />
          </Icon>
        </button>
        <button aria-label="账单">
          <Icon className={icon}>
            <path d="M3 10V1h13M3 10H1v3l2 2h13M3 10v5M10 3.500v8M12 5H9a1.300 1.300 0 0 0 0 2.700h2a1.300 1.300 0 0 1 0 2.600H8" />
          </Icon>
        </button>
        <button aria-label="行情">
          <Icon className={icon}>
            <path d="M1.500 15v-4M5 15V9.500M8.500 15V8M12 15V6M15.500 15V4M1 8c6-1 8-3 11-6.500M8.500 1H12v4" />
          </Icon>
        </button>
        <button aria-label="看板">
          <Icon className={icon}>
            <path d="M1 1h15v11H1zM4.500 9.500V7M8 9.500V4M11.500 9.500V6M5 15h9" />
          </Icon>
        </button>
      </div>
      <span className="mt-[17px] ml-1.5 h-px bg-[#33363a]" />
      <button aria-label="兑换" className="mt-[19px] ml-3.5">
        <Icon className={icon}>
          <circle cx="8" cy="8" r="7" />
          <path d="M4 6.500h8L9.500 4M12 9.500H4L6.500 12" />
        </Icon>
      </button>
      <div className="mt-auto flex flex-col gap-[38px] pl-[13px]">
        <button aria-label="布局">
          <Icon className={icon}>
            <path d="M1 1h15v14H1zM1 5h15M4.500 5v10" />
          </Icon>
        </button>
        <button aria-label="客服">
          <Icon className={icon}>
            <path d="M3 10V7a6 6 0 0 1 12 0v3M3 7.500H1.500v4H3zM5 12c1 2 2 2.500 4 2.500" strokeWidth="1.400" />
          </Icon>
        </button>
        <svg viewBox="0 0 18 12" className="-ml-0.5 h-3 w-[18px] shrink-0">
          <path d="M0 0l5 2c2-1.500 8-2 13-1v11H1z" fill="#e8e6f2" />
          <path d="M3 12c0-4 3-7 8-7h7v7z" fill="#2a2450" />
          <path d="M8 11c1-2 3-2 4 0" stroke="#fff" strokeWidth="1.500" fill="none" />
        </svg>
      </div>
    </nav>
  );
}

function Handle({ flip }: { flip?: boolean }) {
  return (
    <button aria-label="收起侧栏" className="mt-[468px] flex h-[38px] w-[7px] shrink-0 items-center justify-center rounded-xs bg-[#2b2d2f]">
      <svg viewBox="0 0 4 6" className="h-1.5 w-1 fill-[#9a9da0]">
        <path d={flip ? "M4 0v6L0 3z" : "M0 0v6l4-3z"} />
      </svg>
    </button>
  );
}

function App() {
  return (
    <div className="flex min-h-screen flex-col overflow-hidden bg-black font-['Roboto','Noto_Sans_CJK_SC',sans-serif]">
      <div className="flex h-2 justify-end pr-[284px]">
        <div className="h-[3px] w-[200px] rounded-b border border-t-0 border-[#3a3d40]" />
      </div>
      <div className="flex flex-1">
        <div className="w-2 shrink-0 bg-[#0c0e10]" />
        <div className="flex w-[7px] shrink-0 flex-col">
          <Handle />
        </div>
        <main className="flex min-w-0 flex-1 flex-col">
          <Tabs />
          <PeriodBar />
          <DrawBar />
          <section className="border-x border-b border-[#1a1c1e]">
            <MainPane />
            <MacdPane />
            <KdjPane />
            <DateAxis />
          </section>
          <BottomBar />
        </main>
        <div className="flex w-[7px] shrink-0 flex-col">
          <Handle flip />
        </div>
        <SideRail />
      </div>
    </div>
  );
}

export default App;
